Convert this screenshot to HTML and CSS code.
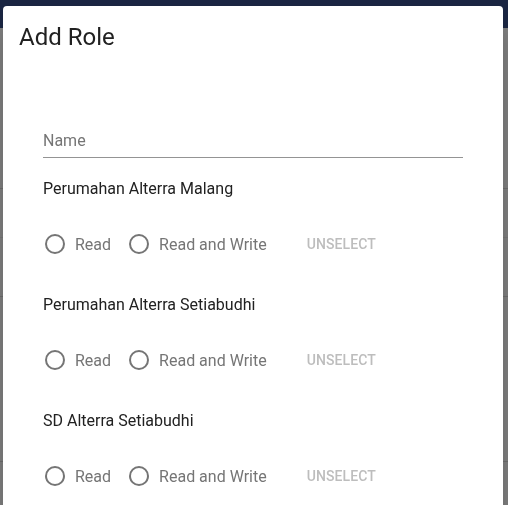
FILE: index.html
```html
<!DOCTYPE html>
<html>
<head>
<meta charset="utf-8">
<link rel="stylesheet" href="styles.css">
</head>
<body>
<div class="page">
  <div class="topbar"></div>
  <div class="bg-row r1"></div>
  <div class="bg-row r2 light"></div>
  <div class="bg-row r3"></div>
  <div class="bg-row r4"></div>
</div>
<div class="dialog">
  <h2 class="title">Add Role</h2>
  <div class="content">
    <div class="field"><span class="placeholder">Name</span></div>
    <div class="section">
      <div class="section-label">Perumahan Alterra Malang</div>
      <div class="radio-row">
        <label class="radio"><svg width="24" height="24" viewBox="0 0 24 24"><circle cx="12" cy="12" r="9" fill="none" stroke="#757575" stroke-width="2"/></svg><span>Read</span></label>
        <label class="radio"><svg width="24" height="24" viewBox="0 0 24 24"><circle cx="12" cy="12" r="9" fill="none" stroke="#757575" stroke-width="2"/></svg><span>Read and Write</span></label>
        <button class="unselect">Unselect</button>
      </div>
    </div>
    <div class="section">
      <div class="section-label">Perumahan Alterra Setiabudhi</div>
      <div class="radio-row">
        <label class="radio"><svg width="24" height="24" viewBox="0 0 24 24"><circle cx="12" cy="12" r="9" fill="none" stroke="#757575" stroke-width="2"/></svg><span>Read</span></label>
        <label class="radio"><svg width="24" height="24" viewBox="0 0 24 24"><circle cx="12" cy="12" r="9" fill="none" stroke="#757575" stroke-width="2"/></svg><span>Read and Write</span></label>
        <button class="unselect">Unselect</button>
      </div>
    </div>
    <div class="section">
      <div class="section-label">SD Alterra Setiabudhi</div>
      <div class="radio-row">
        <label class="radio"><svg width="24" height="24" viewBox="0 0 24 24"><circle cx="12" cy="12" r="9" fill="none" stroke="#757575" stroke-width="2"/></svg><span>Read</span></label>
        <label class="radio"><svg width="24" height="24" viewBox="0 0 24 24"><circle cx="12" cy="12" r="9" fill="none" stroke="#757575" stroke-width="2"/></svg><span>Read and Write</span></label>
        <button class="unselect">Unselect</button>
      </div>
    </div>
  </div>
</div>
</body>
</html>
```

FILE: styles.css
```css
html, body {
  margin: 0;
  padding: 0;
  height: 100%;
  overflow: hidden;
  font-family: Roboto, "Liberation Sans", sans-serif;
}
.page {
  background: #808080;
  height: 100%;
}
.topbar {
  height: 28px;
  background: #1b2643;
}
.bg-row {
  border-bottom: 1px solid #6e6e6e;
}
.bg-row.light {
  border-bottom-color: #787878;
}
.r1 { height: 160px; }
.r2 { height: 48px; }
.r3 { height: 58px; }
.r4 { height: 164px; }

.dialog {
  position: fixed;
  top: 6px;
  left: 3px;
  width: 500px;
  bottom: -20px;
  background: #fff;
  border-radius: 4px;
  box-shadow: 0 11px 15px -7px rgba(0,0,0,0.2), 0 24px 38px 3px rgba(0,0,0,0.14);
}
.title {
  margin: 0;
  padding: 17px 16px 0;
  font-size: 24px;
  font-weight: 400;
  line-height: 28px;
  color: #212121;
}
.content {
  padding: 80px 40px 0;
}
.field {
  height: 26px;
  border-bottom: 1px solid #949494;
  margin-bottom: 21px;
}
.placeholder {
  display: block;
  font-size: 16px;
  line-height: 19px;
  color: #757575;
}
.section-label {
  font-size: 16px;
  line-height: 19px;
  color: #212121;
  margin-bottom: 25px;
}
.radio-row {
  display: flex;
  align-items: center;
  height: 42px;
  margin-bottom: 30px;
}
.radio {
  display: flex;
  align-items: center;
  gap: 8px;
  font-size: 16px;
  color: #757575;
  margin-right: 16px;
}
.radio svg {
  display: block;
}
.unselect {
  margin-left: 16px;
  border: none;
  background: none;
  padding: 6px 8px;
  font-family: Roboto, "Liberation Sans", sans-serif;
  font-size: 14px;
  font-weight: 500;
  text-transform: uppercase;
  color: #bdbdbd;
  letter-spacing: 0.1px;
}
```
